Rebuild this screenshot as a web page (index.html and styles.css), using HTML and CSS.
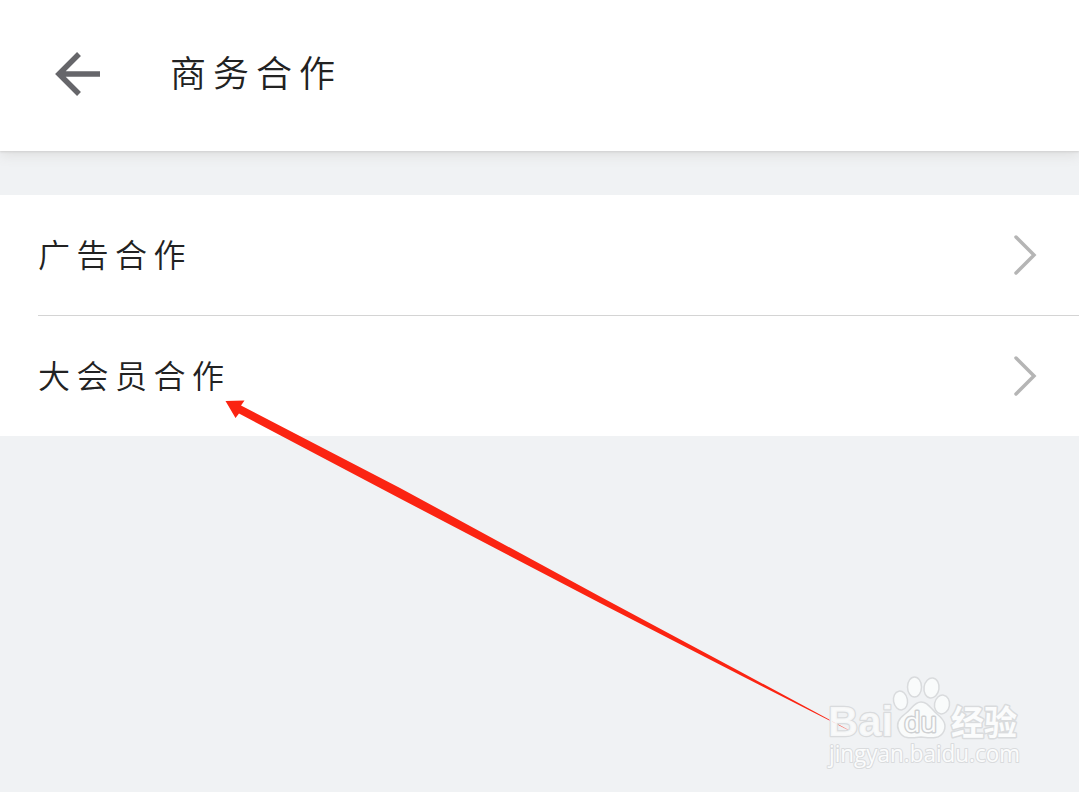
FILE: index.html
```html
<!DOCTYPE html>
<html lang="zh-CN">
<head>
    <meta charset="UTF-8">
    <meta name="viewport" content="width=device-width, initial-scale=1.0">
    <title>商务合作</title>
    <link rel="stylesheet" href="styles.css">
</head>
<body>
    <header class="header">
        <svg class="back" width="46" height="46" viewBox="0 0 46 46">
            <path d="M45 23H4M24 3L4 23L24 43"/>
        </svg>
        <h1 class="title">商务合作</h1>
    </header>

    <main class="list">
        <a class="item">
            <span class="label">广告合作</span>
            <svg class="chevron" width="24" height="42" viewBox="0 0 24 42">
                <path d="M3 3L21 21L3 39"/>
            </svg>
        </a>
        <a class="item">
            <span class="label">大会员合作</span>
            <svg class="chevron" width="24" height="42" viewBox="0 0 24 42">
                <path d="M3 3L21 21L3 39"/>
            </svg>
        </a>
    </main>

    <svg class="pointer" width="640" height="346" viewBox="220 395 640 346">
        <path d="M225.500 401L244.500 400.500L241 405.500L400 488L600 596.500L740 671.500L856 734L740 675L600 603L400 498.500L239 413.500L235.500 418Z"/>
    </svg>

    <svg class="watermark" width="210" height="110" viewBox="820 668 210 110">
        <text class="bai" x="828" y="736" textLength="65" lengthAdjust="spacingAndGlyphs">Bai</text>
        <ellipse cx="900.500" cy="700.500" rx="7" ry="9.500" transform="rotate(-10 900.500 700.500)"/>
        <ellipse cx="914.500" cy="687" rx="7" ry="10"/>
        <ellipse cx="931.500" cy="688" rx="7.500" ry="10" transform="rotate(8 931.500 688)"/>
        <ellipse cx="942" cy="704.500" rx="7.500" ry="9.500" transform="rotate(10 942 704.500)"/>
        <path d="M921 702C914 702 912 709 905 714C898 719 896 725 899 731C903 740 912 738 921 737C930 738 940 740 944 731C947 724 943 719 937 714C930 708 928 702 921 702Z"/>
        <text class="du" x="904" y="732" textLength="33" lengthAdjust="spacingAndGlyphs">du</text>
        <text class="jingyan" x="951" y="735" textLength="66" lengthAdjust="spacingAndGlyphs">经验</text>
        <text class="url" x="829" y="762" textLength="191" lengthAdjust="spacingAndGlyphs">jingyan.baidu.com</text>
    </svg>
</body>
</html>
```
FILE: styles.css
```css
html {
    height: 100%;
}

body {
    position: relative;
    margin: 0;
    height: 792px;
    overflow: hidden;
    background-color: #f0f2f4;
    color: #222;
    font-family: "Noto Sans CJK SC", sans-serif;
    font-weight: 350;
}

.header {
    display: flex;
    align-items: center;
    gap: 69px;
    box-sizing: border-box;
    height: 151px;
    padding: 0 55px 4px;
    background-color: #fff;
    box-shadow: 0 1px 2px #d0d0d0, 0 4px 12px #dedede;
}

.back path {
    fill: none;
    stroke: #66666a;
    stroke-width: 5.500;
}

.title {
    margin: 0;
    padding-bottom: 5px;
    font-size: 36px;
    font-weight: 350;
    letter-spacing: 7px;
    line-height: 48px;
}

.list {
    margin-top: 44px;
    background-color: #fff;
}

.item {
    display: flex;
    align-items: center;
    justify-content: space-between;
    box-sizing: border-box;
    height: 120px;
    margin-left: 38px;
    padding-right: 42px;
}

.item + .item {
    height: 121px;
    border-top: 1px solid #d4d4d4;
}

.label {
    padding-bottom: 5px;
    font-size: 32px;
    letter-spacing: 6.500px;
    line-height: 40px;
}

.chevron path {
    fill: none;
    stroke: #b5b5b5;
    stroke-width: 3.500;
    stroke-linecap: round;
}

.pointer {
    position: absolute;
    left: 220px;
    top: 395px;
    fill: #fb2412;
}

.watermark {
    position: absolute;
    left: 820px;
    top: 668px;
    fill: #fbfcfc;
    fill-opacity: .8;
    stroke: #d9dbdd;
    stroke-width: 1.500;
    stroke-linejoin: round;
}

.watermark text {
    paint-order: stroke;
    stroke-width: 3;
    fill-opacity: 1;
}

.watermark .bai {
    font: bold 43px "Liberation Sans", sans-serif;
    fill-opacity: .85;
    stroke-width: 2.500;
}

.watermark .du {
    font: 28px "Open Sans", sans-serif;
    stroke: #ced0d2;
}

.watermark .jingyan {
    font: bold 34px "Noto Sans CJK SC", sans-serif;
}

.watermark .url {
    font: 23px "Open Sans", sans-serif;
    stroke-width: 2;
}
```
